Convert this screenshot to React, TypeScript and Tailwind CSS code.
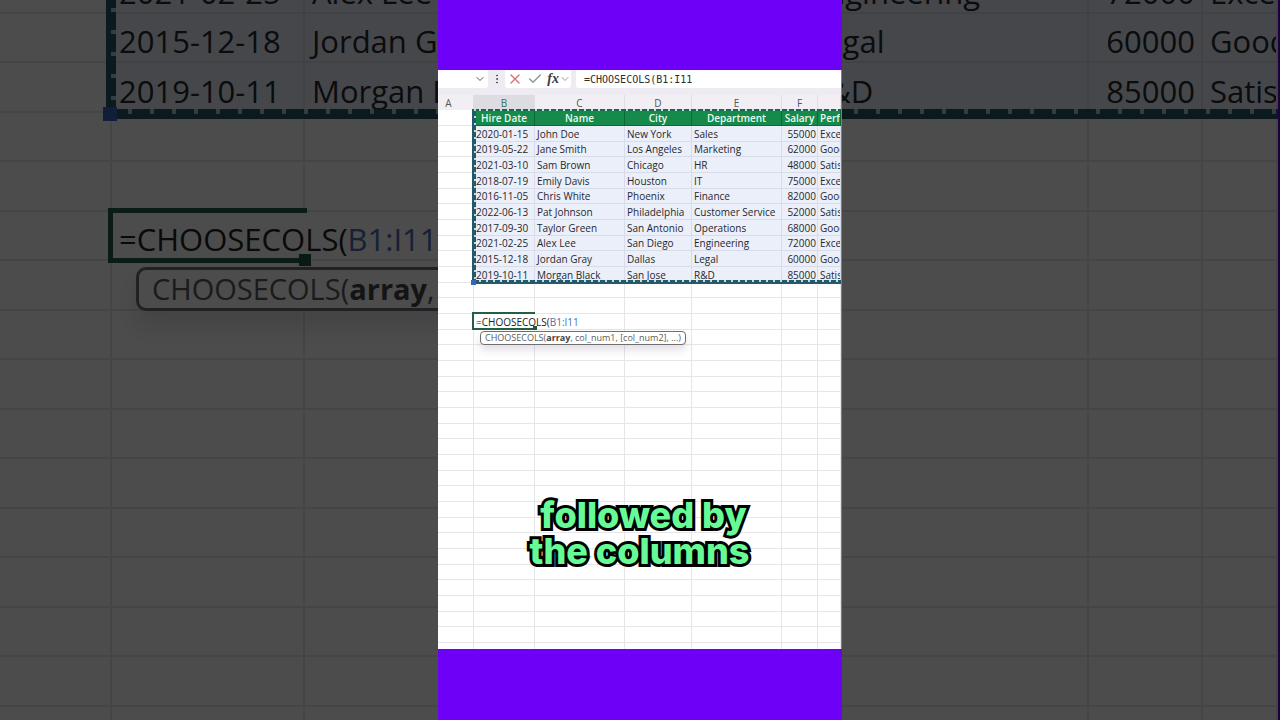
import React from 'react';
import { Check, ChevronDown, EllipsisVertical, X } from 'lucide-react';
import { clsx } from 'clsx';

type Size = 'sm' | 'lg';

const COLUMNS = ['A', 'B', 'C', 'D', 'E', 'F', ''];

const HEADINGS = ['Hire Date', 'Name', 'City', 'Department', 'Salary', 'Performance'];

const EMPLOYEES = [
  ['2020-01-15', 'John Doe', 'New York', 'Sales', '55000', 'Excellent'],
  ['2019-05-22', 'Jane Smith', 'Los Angeles', 'Marketing', '62000', 'Good'],
  ['2021-03-10', 'Sam Brown', 'Chicago', 'HR', '48000', 'Satisfactory'],
  ['2018-07-19', 'Emily Davis', 'Houston', 'IT', '75000', 'Excellent'],
  ['2016-11-05', 'Chris White', 'Phoenix', 'Finance', '82000', 'Good'],
  ['2022-06-13', 'Pat Johnson', 'Philadelphia', 'Customer Service', '52000', 'Satisfactory'],
  ['2017-09-30', 'Taylor Green', 'San Antonio', 'Operations', '68000', 'Good'],
  ['2021-02-25', 'Alex Lee', 'San Diego', 'Engineering', '72000', 'Excellent'],
  ['2015-12-18', 'Jordan Gray', 'Dallas', 'Legal', '60000', 'Good'],
  ['2019-10-11', 'Morgan Black', 'San Jose', 'R&D', '85000', 'Satisfactory'],
];

const STYLES = {
  sm: {
    table: 'text-[10px] leading-[14px]',
    cols: ['w-9', 'w-[61px]', 'w-[90px]', 'w-[67px]', 'w-[90px]', 'w-9', ''],
    row: 'h-4 nth-[3n]:h-[15px]',
    cell: 'border-r border-b pl-0.5 pr-px',
    range: 'left-[34px] top-[14px] h-[175px]',
    rangeTop: 'h-[2px] bg-[repeating-linear-gradient(90deg,#c3e0d1_0_2px,#17684f_2px_7px)]',
    rangeLeft: 'w-[4px]',
    rangeLeftTicks: 'w-[2px] bg-[repeating-linear-gradient(180deg,#c6d8e0_0_2px,#23596a_2px_7px)]',
    rangeBottom: 'h-[4px]',
    rangeBottomTicks: 'h-[2px] bg-[repeating-linear-gradient(90deg,#c6d8e0_0_2px,#23596a_2px_7px)]',
    rangeCorner: 'size-[5px] -left-px -bottom-px',
    editor: '-left-0.5 -right-px -top-0.5 -bottom-px border-l-2 border-y-2',
    handle: 'size-1 -right-0.5 -bottom-0.5',
    hint: 'left-[6px] top-[17px] rounded-[4px] border px-1 text-[9px] leading-[12px] shadow-[0_5px_8px_rgba(80,50,100,0.16)]',
  },
  lg: {
    table: 'text-[31px] leading-[39px]',
    cols: ['w-28', 'w-[193px]', 'w-[285px]', 'w-[212px]', 'w-[287px]', 'w-[114px]', ''],
    row: 'odd:h-[50px] even:h-[49px]',
    cell: 'border-r-2 border-b-2 pt-2 pl-[7px] pr-[6px]',
    range: 'left-[106px] top-0 h-[155px]',
    rangeTop: 'hidden',
    rangeLeft: 'w-[10px]',
    rangeLeftTicks: 'w-[5px] bg-[repeating-linear-gradient(180deg,#b4ccd2_0_4px,#23596a_4px_22px)]',
    rangeBottom: 'h-[10px]',
    rangeBottomTicks: 'h-[5px] bg-[repeating-linear-gradient(90deg,#b4ccd2_0_4px,#23596a_4px_22px)]',
    rangeCorner: 'size-[14px] -left-[3px] -bottom-[2px]',
    editor: '-left-1 -right-1 -top-1 -bottom-1 border-l-[5px] border-y-[5px]',
    handle: 'size-3 -right-1 -bottom-2',
    hint: 'left-6 top-[55px] rounded-[10px] border-[3px] px-[13px] text-[29px] leading-[38px] shadow-[0_16px_24px_rgba(80,50,100,0.16)]',
  },
};

interface SheetProps {
  size: Size;
  firstEmployee?: number;
  blankRows: number;
  showHeadings?: boolean;
}

function Formula({ size }: { size: Size }) {
  const s = STYLES[size];
  return (
    <>
      <div className={clsx('absolute border-[#245f43] bg-white', s.editor)}>
        <span className={clsx('absolute bg-[#1c5a3b]', s.handle)} />
      </div>
      <span className="relative whitespace-nowrap text-[#222]">
        =CHOOSECOLS(<span className="text-[#4b70b5]">B1:I11</span>
      </span>
      <div
        role="tooltip"
        className={clsx('absolute whitespace-nowrap border-[#6f6f6f] bg-white font-normal text-[#5c5c5c]', s.hint)}
      >
        CHOOSECOLS(<b className="text-[#444]">array</b>, col_num1, [col_num2], ...)
      </div>
    </>
  );
}

function Selection({ size }: { size: Size }) {
  const s = STYLES[size];
  return (
    <div className={clsx('pointer-events-none absolute right-0', s.range)}>
      <div className={clsx('absolute inset-x-0 top-0', s.rangeTop)} />
      <div className={clsx('absolute inset-y-0 left-0 bg-[#23596a]', s.rangeLeft)}>
        <div className={clsx('absolute inset-y-0 right-0', s.rangeLeftTicks)} />
      </div>
      <div className={clsx('absolute inset-x-0 bottom-0 bg-[#23596a]', s.rangeBottom)}>
        <div className={clsx('absolute inset-x-0 top-0', s.rangeBottomTicks)} />
      </div>
      <div className={clsx('absolute bg-[#3765c0]', s.rangeCorner)} />
    </div>
  );
}

function Sheet({ size, firstEmployee = 0, blankRows, showHeadings = false }: SheetProps) {
  const s = STYLES[size];
  const cell = clsx(s.cell, 'border-[#e6e6e8] whitespace-nowrap');

  const blankRow = (key: string) => (
    <tr key={key} className={s.row}>
      {COLUMNS.map((_, i) => (
        <td key={i} className={cell} />
      ))}
    </tr>
  );

  return (
    <div className="relative">
      <table
        className={clsx(
          "w-full table-fixed border-separate border-spacing-0 font-['Open_Sans',sans-serif] font-medium text-[#26282e]",
          s.table
        )}
      >
        <colgroup>
          {s.cols.map((width, i) => (
            <col key={i} className={width} />
          ))}
        </colgroup>
        {showHeadings && (
          <thead>
            <tr className="h-[15px] bg-[#f1eff3] text-[#55555a]">
              {COLUMNS.map((letter, i) => (
                <th
                  key={i}
                  className={clsx(
                    'border-r border-[#e0dee3] p-0 text-center font-normal',
                    i === 0 && 'pr-3.5',
                    i === 1 && 'bg-[#dddce0] text-[#38735a]'
                  )}
                >
                  {letter}
                </th>
              ))}
            </tr>
          </thead>
        )}
        <tbody>
          {showHeadings && (
            <tr className={s.row}>
              <td className={cell} />
              {HEADINGS.map((heading, i) => (
                <th
                  key={heading}
                  className={clsx(
                    'overflow-hidden whitespace-nowrap border-r border-b border-[#0d6a38] bg-[#158a4b] p-0 font-semibold text-[#eefaf2]',
                    i === 5 ? 'pl-0.5 text-left' : 'text-center'
                  )}
                >
                  {heading}
                </th>
              ))}
            </tr>
          )}
          {EMPLOYEES.slice(firstEmployee).map((employee) => (
            <tr key={employee[0]} className={s.row}>
              <td className={cell} />
              {employee.map((value, i) => (
                <td
                  key={i}
                  className={clsx(
                    s.cell,
                    'overflow-hidden whitespace-nowrap border-[#d8dce8] bg-[#ebeff9]',
                    i === 4 && 'text-right'
                  )}
                >
                  {value}
                </td>
              ))}
            </tr>
          ))}
          {blankRow('gap-1')}
          {blankRow('gap-2')}
          <tr className={s.row}>
            <td className={cell} />
            <td className={clsx(cell, 'relative')}>
              <Formula size={size} />
            </td>
            {COLUMNS.slice(2).map((_, i) => (
              <td key={i} className={cell} />
            ))}
          </tr>
          {Array.from({ length: blankRows }, (_, i) => blankRow(`blank-${i}`))}
        </tbody>
      </table>
      <Selection size={size} />
    </div>
  );
}

function FormulaBar() {
  return (
    <div className="flex h-[25px] items-start bg-[#efebf3]">
      <div className="flex h-[18px] w-[50px] items-center justify-end rounded-br-[3px] bg-white pr-0.5">
        <button type="button" aria-label="Name box" className="text-[#555]">
          <ChevronDown size={12} />
        </button>
      </div>
      <div className="flex h-[18px] w-[17px] items-center justify-center text-[#444]">
        <EllipsisVertical size={12} />
      </div>
      <div className="flex h-[18px] w-[66px] items-center justify-between rounded-b-[3px] bg-white pl-0.5">
        <button type="button" aria-label="Cancel" className="text-[#d8707a]">
          <X size={16} strokeWidth={2} />
        </button>
        <button type="button" aria-label="Enter" className="text-[#7f9d88]">
          <Check size={16} strokeWidth={2} />
        </button>
        <button
          type="button"
          aria-label="Insert function"
          className="flex items-center font-['Liberation_Serif',serif] text-[14px] leading-[18px] font-bold text-[#3c3c3c] italic"
        >
          fx
          <ChevronDown size={12} className="text-[#999]" />
        </button>
      </div>
      <input
        aria-label="Formula"
        defaultValue="=CHOOSECOLS(B1:I11"
        className="ml-[5px] h-[18px] min-w-0 flex-1 rounded-bl-[3px] bg-white pl-2 font-['DejaVu_Sans_Mono',monospace] text-[10px] text-[#2d2d2d] outline-none"
      />
    </div>
  );
}

export default function App() {
  return (
    <main className="grid h-screen grid-cols-1 grid-rows-1 overflow-hidden bg-black">
      {/* Enlarged, dimmed copy behind the clip */}
      <div aria-hidden="true" className="relative col-start-1 row-start-1 overflow-hidden border-r-2 border-[#1c0040] bg-white">
        <div className="-mt-9">
          <Sheet size="lg" firstEmployee={7} blankRows={12} />
        </div>
        <div className="absolute inset-0 bg-black/70" />
      </div>

      <div className="relative z-10 col-start-1 row-start-1 mx-auto flex w-full max-w-[404px] flex-col overflow-hidden bg-[#6e00f8] pt-[70px] pb-[71px]">
        <div className="relative min-h-0 flex-1 overflow-hidden border-r border-[#8f6bb8] bg-white">
          <FormulaBar />
          <Sheet size="sm" blankRows={24} showHeadings />
          <p className="absolute inset-x-0 bottom-20 text-center font-[Inter,sans-serif] text-[36px] leading-9 font-extrabold text-[#66fb96] [-webkit-text-stroke:6px_#000] [paint-order:stroke_fill] [stroke-linejoin:round]">
            <span className="block pl-2">followed by</span>
            <span className="block">the columns</span>
          </p>
        </div>
      </div>
    </main>
  );
}
